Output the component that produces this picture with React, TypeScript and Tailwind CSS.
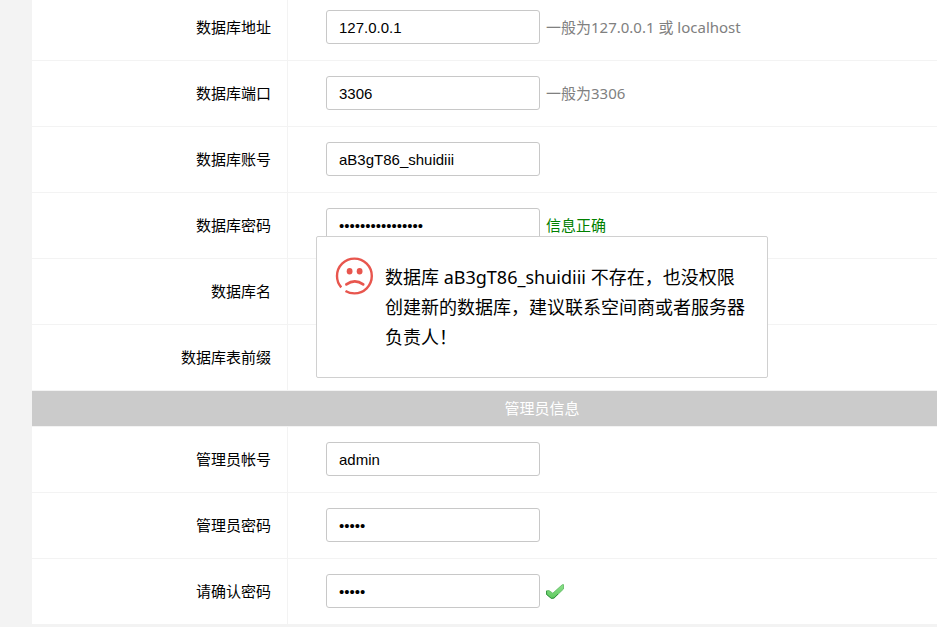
import React, { useState } from "react";
import type { ReactNode } from "react";

interface FieldProps {
  id: string;
  label: string;
  type?: string;
  initial?: string;
  first?: boolean;
  children?: ReactNode;
}

function Field({ id, label, type = "text", initial = "", first, children }: FieldProps) {
  const [value, setValue] = useState(initial);

  return (
    <div className="flex border-b border-[#f3f3f3]">
      <label
        htmlFor={id}
        className={`flex w-64 shrink-0 items-center justify-end border-r border-[#f3f3f3] pr-4 pb-4 ${
          first ? "pt-[10px]" : "pt-[15px]"
        }`}
      >
        {label}
      </label>
      <div
        className={`flex grow items-center gap-[6px] pb-4 pl-[38px] ${
          first ? "pt-[10px]" : "pt-[15px]"
        }`}
      >
        <input
          id={id}
          type={type}
          value={value}
          onChange={(e) => setValue(e.target.value)}
          className="h-[34px] w-[214px] rounded-[3px] border border-[#c8c8c8] bg-white px-3 font-['Liberation_Sans',Arial,sans-serif] text-[15px] text-black outline-none"
        />
        {children}
      </div>
    </div>
  );
}

function SadFace() {
  return (
    <svg viewBox="0 0 38 38" className="h-[38px] w-[38px] shrink-0" fill="none" aria-hidden="true">
      <g stroke="#e8564e">
        <circle
          cx="19.4"
          cy="19"
          r="17.4"
          strokeWidth="2.4"
          pathLength="360"
          strokeDasharray="121 18 221 0"
        />
        <path d="M11.4 27.4 Q19.8 21.4 28.2 27.4" strokeWidth="2.7" strokeLinecap="round" />
      </g>
      <ellipse cx="14.6" cy="14.2" rx="2.9" ry="3.2" fill="#e8564e" />
      <ellipse cx="24.6" cy="14.2" rx="2.9" ry="3.2" fill="#e8564e" />
    </svg>
  );
}

function GreenTick() {
  return (
    <svg viewBox="0 0 18 16" className="h-4 w-[18px]" role="img" aria-label="OK">
      <defs>
        <linearGradient id="tick" x1="0" y1="0" x2="0" y2="1">
          <stop offset="0" stopColor="#8be08a" />
          <stop offset="1" stopColor="#5fca5f" />
        </linearGradient>
      </defs>
      <path
        d="M0.5 7.8 L3 7.6 L6.8 10.2 L16.2 1.8 L17.5 1.6 V6 L8.2 15 L5.4 15.4 L0.5 11.4 Z"
        fill="url(#tick)"
        stroke="#5cb85f"
        strokeWidth="0.8"
        strokeLinejoin="round"
      />
      <path d="M0.6 8 V11.4 L5.4 15.4 L8 15 L12 11" fill="none" stroke="#2f8f3c" strokeWidth="0.9" />
    </svg>
  );
}

function App() {
  return (
    <main className="min-h-screen overflow-x-hidden bg-[#f3f3f3] pl-8 font-['Noto_Sans','Noto_Sans_CJK_SC',sans-serif] text-[15px] leading-5 text-black">
      <form className="relative min-w-[1020px] bg-white">
        <Field id="dbHost" label="数据库地址" initial="127.0.0.1" first>
          <span className="text-[#808080]">一般为127.0.0.1 或 localhost</span>
        </Field>
        <Field id="dbPort" label="数据库端口" initial="3306">
          <span className="text-[#808080]">一般为3306</span>
        </Field>
        <Field id="dbUser" label="数据库账号" initial="aB3gT86_shuidiii" />
        <Field id="dbPass" label="数据库密码" type="password" initial="aB3gT86_shuidiii">
          <span className="text-[#008000]">信息正确</span>
        </Field>
        <Field id="dbName" label="数据库名" />
        <Field id="dbPrefix" label="数据库表前缀" />

        <h2 className="border-b border-[#f3f3f3] bg-[#cbcbcb] pt-[7px] pb-2 text-center text-white">
          管理员信息
        </h2>
        <Field id="adminUser" label="管理员帐号" initial="admin" />
        <Field id="adminPass" label="管理员密码" type="password" initial="admin" />
        <Field id="adminPass2" label="请确认密码" type="password" initial="admin">
          <GreenTick />
        </Field>

        <div
          role="alertdialog"
          aria-label="提示"
          className="absolute top-[236px] left-1/2 flex w-[452px] -translate-x-1/2 gap-3 rounded-xs border border-[#d0d0d0] bg-white pt-5 pr-5 pb-[25px] pl-[18px]"
        >
          <SadFace />
          <p className="pt-[5px] text-[18px] leading-[30px]">
            数据库 aB3gT86_shuidiii 不存在，也没权限
            <br />
            创建新的数据库，建议联系空间商或者服务器
            <br />
            负责人！
          </p>
        </div>
      </form>
    </main>
  );
}

export default App;
